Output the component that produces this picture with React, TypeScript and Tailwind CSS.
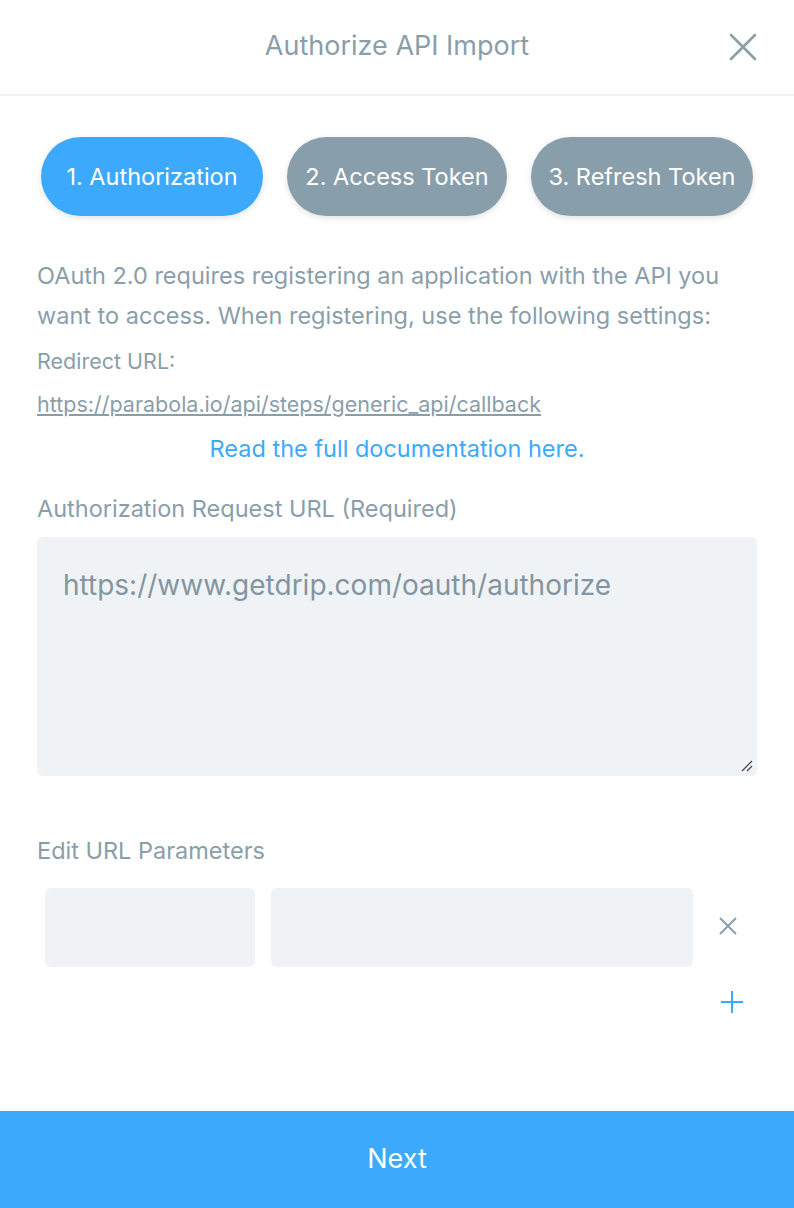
import React from "react";

export default function App() {
  return (
    <div
      className="w-[794px] h-[1208px] bg-white flex flex-col text-[#8a9eaa]"
      style={{ fontFamily: "Inter, 'Noto Sans', sans-serif" }}
    >
      <div className="relative h-[96px] shrink-0 border-b-2 border-[#eef2f5] flex items-center justify-center">
        <div className="text-[27px] leading-[32px] text-[#8a9eaa] -mt-[2px]">Authorize API Import</div>
        <button className="absolute right-[37px] top-[33px] w-[28px] h-[28px] flex items-center justify-center">
          <svg width="28" height="28" viewBox="0 0 28 28" fill="none" stroke="#8a9eaa" strokeWidth="2.6" strokeLinecap="round">
            <path d="M2 2 L26 26 M26 2 L2 26" />
          </svg>
        </button>
      </div>

      <div className="flex-1 px-[37px]">
        <div className="flex gap-[24px] pl-[4px] pt-[41px]">
          <button className="w-[222px] h-[79px] rounded-full bg-[#3ca9fd] text-white text-[23.5px] shadow-[0_2px_6px_rgba(0,0,0,0.12)]">
            1. Authorization
          </button>
          <button className="w-[220px] h-[79px] rounded-full bg-[#889eaa] text-white text-[23.5px] shadow-[0_2px_6px_rgba(0,0,0,0.12)]">
            2. Access Token
          </button>
          <button className="w-[222px] h-[79px] rounded-full bg-[#889eaa] text-white text-[23.5px] shadow-[0_2px_6px_rgba(0,0,0,0.12)]">
            3. Refresh Token
          </button>
        </div>

        <p className="mt-[40px] text-[23.5px] leading-[40px]">
          OAuth 2.0 requires registering an application with the API you want to access. When registering, use the following settings:
        </p>
        <div className="mt-[13px] text-[21.5px] leading-[24px]">Redirect URL:</div>
        <div className="mt-[19px] text-[21.5px] leading-[24px] underline">
          https://parabola.io/api/steps/generic_api/callback
        </div>
        <div className="mt-[21px] text-center text-[23.5px] leading-[24px] text-[#3ca9fd]">
          Read the full documentation here.
        </div>

        <div className="mt-[36px] text-[23.5px] leading-[24px]">Authorization Request URL (Required)</div>
        <div className="relative mt-[16px] h-[239px] rounded-[6px] bg-[#eff3f6] px-[26px] pt-[32px]">
          <div className="text-[28px] leading-[32px] text-[#84959f]">https://www.getdrip.com/oauth/authorize</div>
          <svg className="absolute right-[3px] bottom-[3px]" width="14" height="14" viewBox="0 0 14 14" stroke="#444" strokeWidth="1.2" fill="none">
            <path d="M2 12 L12 2 M7 12 L12 7" />
          </svg>
        </div>

        <div className="mt-[63px] text-[23.5px] leading-[24px]">Edit URL Parameters</div>
        <div className="mt-[25px] flex items-center pl-[8px]">
          <div className="w-[210px] h-[79px] rounded-[6px] bg-[#eff3f6]" />
          <div className="ml-[16px] w-[422px] h-[79px] rounded-[6px] bg-[#eff3f6]" />
          <div className="ml-[25px] mt-[-4px]">
            <svg width="20" height="20" viewBox="0 0 20 20" stroke="#8a9eaa" strokeWidth="2" fill="none">
              <path d="M2 2 L18 18 M18 2 L2 18" />
            </svg>
          </div>
        </div>
        <div className="flex justify-end pr-[14px] mt-[24px]">
          <svg width="22" height="22" viewBox="0 0 22 22" stroke="#3ca9fd" strokeWidth="2" fill="none">
            <path d="M11 0 V22 M0 11 H22" />
          </svg>
        </div>
      </div>

      <button className="h-[97px] shrink-0 w-full bg-[#3ca9fd] text-white text-[27px]">Next</button>
    </div>
  );
}
